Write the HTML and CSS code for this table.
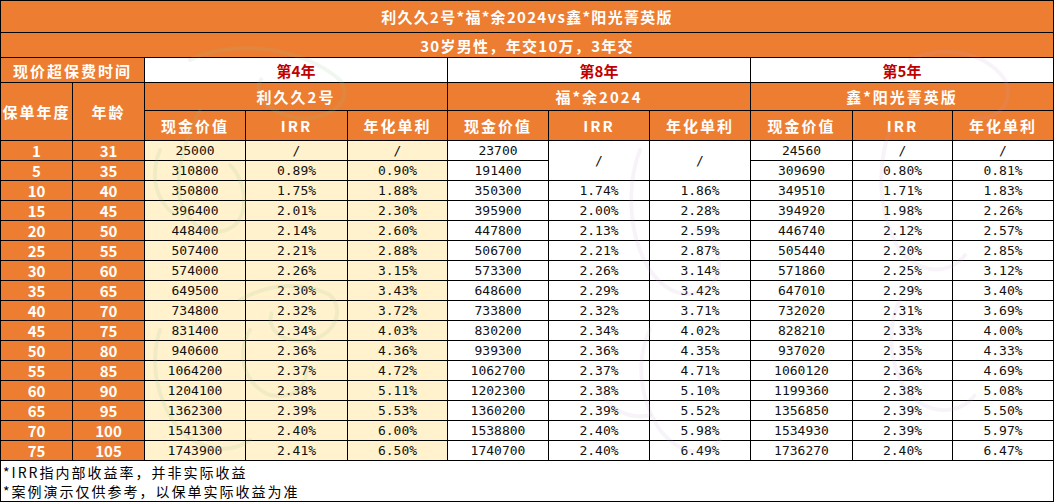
FILE: index.html
```html
<!DOCTYPE html>
<html lang="zh">
<head>
<meta charset="utf-8">
<title>利久久2号*福*余2024vs鑫*阳光菁英版</title>
<link rel="stylesheet" href="styles.css">
</head>
<body>
<div class="wrap">
<table class="sheet">
  <colgroup>
    <col class="c-narrow"><col class="c-narrow">
    <col class="c101"><col class="c102"><col class="c100">
    <col class="c101"><col class="c101"><col class="c101">
    <col class="c102"><col class="c100"><col class="c101">
  </colgroup>
  <tbody>
    <tr class="r-title"><td class="hd title" colspan="11">利久久2号*福*余2024vs鑫*阳光菁英版</td></tr>
    <tr class="r-sub"><td class="hd title" colspan="11">30岁男性，年交10万，3年交</td></tr>
    <tr class="r-sub">
      <td class="hd" colspan="2">现价超保费时间</td>
      <td class="red" colspan="3">第4年</td>
      <td class="red" colspan="3">第8年</td>
      <td class="red" colspan="3">第5年</td>
    </tr>
    <tr class="r-prod">
      <td class="hd" rowspan="2">保单年度</td>
      <td class="hd" rowspan="2">年龄</td>
      <td class="hd" colspan="3">利久久2号</td>
      <td class="hd" colspan="3">福*余2024</td>
      <td class="hd" colspan="3">鑫*阳光菁英版</td>
    </tr>
    <tr class="r-cols">
      <td class="hd">现金价值</td><td class="hd">IRR</td><td class="hd">年化单利</td>
      <td class="hd">现金价值</td><td class="hd">IRR</td><td class="hd">年化单利</td>
      <td class="hd">现金价值</td><td class="hd">IRR</td><td class="hd">年化单利</td>
    </tr>
    <tr><td class="yr">1</td><td class="yr">31</td><td class="y">25000</td><td class="y">/</td><td class="y">/</td><td>23700</td><td rowspan="2">/</td><td rowspan="2">/</td><td>24560</td><td>/</td><td>/</td></tr>
    <tr><td class="yr">5</td><td class="yr">35</td><td class="y">310800</td><td class="y">0.89%</td><td class="y">0.90%</td><td>191400</td><td>309690</td><td>0.80%</td><td>0.81%</td></tr>
    <tr><td class="yr">10</td><td class="yr">40</td><td class="y">350800</td><td class="y">1.75%</td><td class="y">1.88%</td><td>350300</td><td>1.74%</td><td>1.86%</td><td>349510</td><td>1.71%</td><td>1.83%</td></tr>
    <tr><td class="yr">15</td><td class="yr">45</td><td class="y">396400</td><td class="y">2.01%</td><td class="y">2.30%</td><td>395900</td><td>2.00%</td><td>2.28%</td><td>394920</td><td>1.98%</td><td>2.26%</td></tr>
    <tr><td class="yr">20</td><td class="yr">50</td><td class="y">448400</td><td class="y">2.14%</td><td class="y">2.60%</td><td>447800</td><td>2.13%</td><td>2.59%</td><td>446740</td><td>2.12%</td><td>2.57%</td></tr>
    <tr><td class="yr">25</td><td class="yr">55</td><td class="y">507400</td><td class="y">2.21%</td><td class="y">2.88%</td><td>506700</td><td>2.21%</td><td>2.87%</td><td>505440</td><td>2.20%</td><td>2.85%</td></tr>
    <tr><td class="yr">30</td><td class="yr">60</td><td class="y">574000</td><td class="y">2.26%</td><td class="y">3.15%</td><td>573300</td><td>2.26%</td><td>3.14%</td><td>571860</td><td>2.25%</td><td>3.12%</td></tr>
    <tr><td class="yr">35</td><td class="yr">65</td><td class="y">649500</td><td class="y">2.30%</td><td class="y">3.43%</td><td>648600</td><td>2.29%</td><td>3.42%</td><td>647010</td><td>2.29%</td><td>3.40%</td></tr>
    <tr><td class="yr">40</td><td class="yr">70</td><td class="y">734800</td><td class="y">2.32%</td><td class="y">3.72%</td><td>733800</td><td>2.32%</td><td>3.71%</td><td>732020</td><td>2.31%</td><td>3.69%</td></tr>
    <tr><td class="yr">45</td><td class="yr">75</td><td class="y">831400</td><td class="y">2.34%</td><td class="y">4.03%</td><td>830200</td><td>2.34%</td><td>4.02%</td><td>828210</td><td>2.33%</td><td>4.00%</td></tr>
    <tr><td class="yr">50</td><td class="yr">80</td><td class="y">940600</td><td class="y">2.36%</td><td class="y">4.36%</td><td>939300</td><td>2.36%</td><td>4.35%</td><td>937020</td><td>2.35%</td><td>4.33%</td></tr>
    <tr><td class="yr">55</td><td class="yr">85</td><td class="y">1064200</td><td class="y">2.37%</td><td class="y">4.72%</td><td>1062700</td><td>2.37%</td><td>4.71%</td><td>1060120</td><td>2.36%</td><td>4.69%</td></tr>
    <tr><td class="yr">60</td><td class="yr">90</td><td class="y">1204100</td><td class="y">2.38%</td><td class="y">5.11%</td><td>1202300</td><td>2.38%</td><td>5.10%</td><td>1199360</td><td>2.38%</td><td>5.08%</td></tr>
    <tr><td class="yr">65</td><td class="yr">95</td><td class="y">1362300</td><td class="y">2.39%</td><td class="y">5.53%</td><td>1360200</td><td>2.39%</td><td>5.52%</td><td>1356850</td><td>2.39%</td><td>5.50%</td></tr>
    <tr><td class="yr">70</td><td class="yr">100</td><td class="y">1541300</td><td class="y">2.40%</td><td class="y">6.00%</td><td>1538800</td><td>2.40%</td><td>5.98%</td><td>1534930</td><td>2.39%</td><td>5.97%</td></tr>
    <tr><td class="yr">75</td><td class="yr">105</td><td class="y">1743900</td><td class="y">2.41%</td><td class="y">6.50%</td><td>1740700</td><td>2.40%</td><td>6.49%</td><td>1736270</td><td>2.40%</td><td>6.47%</td></tr>
    <tr class="r-foot">
      <td class="note" colspan="11">
        <div class="note-line">*IRR指内部收益率，并非实际收益</div>
        <div class="note-line">*案例演示仅供参考，以保单实际收益为准</div>
      </td>
    </tr>
  </tbody>
</table>
<svg class="watermark" width="1054" height="503" viewBox="0 0 1054 503" aria-hidden="true">
  <g class="wm-green">
    <path d="M190 60 C230 40 300 45 340 80 C355 100 330 120 300 118 C270 115 250 95 262 78"/>
    <path d="M200 110 C185 140 175 170 180 200 C190 230 215 240 235 225 C250 210 245 180 230 165"/>
    <path d="M160 150 C150 175 155 200 175 215"/>
    <path d="M240 300 C265 285 300 280 330 295 C345 310 335 335 310 340 C285 345 265 330 272 312"/>
    <path d="M250 330 C235 355 245 385 270 395 C295 400 310 385 305 365"/>
    <path d="M160 330 C150 360 155 400 180 430 C200 450 230 455 250 440"/>
  </g>
  <g class="wm-purple">
    <path d="M640 150 C625 190 630 240 650 270 C670 300 700 300 715 280 C725 260 715 235 695 230"/>
    <path d="M650 330 C635 360 640 400 660 430 C680 455 705 458 720 440"/>
    <path d="M600 390 C610 410 630 420 650 415"/>
    <path d="M910 60 C940 45 985 50 1005 80 C1015 100 1000 120 975 118"/>
    <path d="M890 130 C875 170 880 220 900 250 C920 275 950 275 965 255"/>
    <path d="M900 300 C885 330 890 370 910 395 C930 415 960 415 975 395"/>
  </g>
</svg>
</div>
</body>
</html>
```

FILE: styles.css
```css
html, body {
  margin: 0;
  padding: 0;
  background: #ffffff;
}

.wrap {
  position: relative;
  width: 1054px;
  height: 503px;
}

.sheet {
  border-collapse: collapse;
  table-layout: fixed;
  width: 1054px;
  font-family: "DejaVu Sans Mono", "Noto Sans CJK SC", monospace;
  font-size: 13px;
  color: #111111;
}

.c-narrow { width: 72px; }
.c100 { width: 100px; }
.c101 { width: 101px; }
.c102 { width: 102px; }

.sheet td {
  border: 1px solid #000000;
  padding: 0;
  text-align: center;
  vertical-align: middle;
  line-height: 1;
  white-space: nowrap;
  overflow: hidden;
}

.sheet tr { height: 20px; }
.sheet tr.r-title { height: 32px; }
.sheet tr.r-sub { height: 25px; }
.sheet tr.r-prod { height: 28px; }
.sheet tr.r-cols { height: 30px; }
.sheet tr.r-foot { height: 41px; }

.hd {
  background: #ed7d31;
  color: #ffffff;
  font-family: "Noto Sans CJK SC", sans-serif;
  font-weight: 700;
  font-size: 15px;
  letter-spacing: 2px;
}

.sheet td.title {
  letter-spacing: 1.3px;
}

.red {
  background: #ffffff;
  color: #c00000;
  font-family: "Noto Sans CJK SC", sans-serif;
  font-weight: 700;
  font-size: 15px;
}

.yr {
  background: #ed7d31;
  color: #ffffff;
  font-family: "Noto Sans CJK SC", sans-serif;
  font-weight: 700;
  font-size: 15px;
}

.y {
  background: #fff2cc;
}

.sheet td.note {
  text-align: left;
  vertical-align: top;
  padding: 2px 0 0 2px;
  font-family: "Noto Sans CJK SC", sans-serif;
  font-size: 14px;
  letter-spacing: 2px;
  color: #000000;
}

.note-line {
  height: 19px;
  line-height: 19px;
}

.watermark {
  position: absolute;
  left: 0;
  top: 0;
  pointer-events: none;
}

.watermark path {
  fill: none;
  stroke-width: 4;
  stroke-dasharray: 1 1.5;
  stroke-linecap: round;
}

.wm-green path { stroke: rgba(150, 200, 150, 0.14); }
.wm-purple path { stroke: rgba(190, 160, 210, 0.13); }
```
